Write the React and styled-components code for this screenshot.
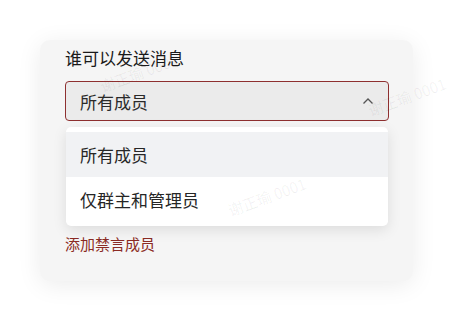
import React from "react";
import styled, { createGlobalStyle } from "styled-components";

const GlobalStyle = createGlobalStyle`
  body {
    margin: 0;
    background: #ffffff;
    font-family: "Noto Sans CJK SC", "Noto Sans", sans-serif;
  }
`;

const Page = styled.div`
  position: relative;
  width: 454px;
  height: 321px;
  overflow: hidden;
  padding: 40px 0 0 40px;
  box-sizing: border-box;
`;

const Card = styled.div`
  width: 373px;
  height: 241px;
  box-sizing: border-box;
  background: #f5f5f5;
  border-radius: 10px;
  box-shadow: 0 4px 24px rgba(0, 0, 0, 0.08);
  padding: 5px 24px 0 25px;
`;

const Title = styled.div`
  font-size: 17px;
  line-height: 25px;
  color: #1a1a1a;
`;

const SelectWrap = styled.div`
  position: relative;
  margin-top: 11px;
`;

const SelectBox = styled.div`
  height: 40px;
  box-sizing: border-box;
  border: 1px solid #8e3030;
  border-radius: 4px;
  background: #ebebeb;
  display: flex;
  align-items: center;
  justify-content: space-between;
  padding: 0 14px 0 14px;
  font-size: 17px;
  color: #2a2a2a;
`;

const Menu = styled.div`
  position: absolute;
  left: 1px;
  right: 1px;
  top: 46px;
  background: #ffffff;
  border-radius: 5px;
  box-shadow: 0 4px 14px rgba(0, 0, 0, 0.1);
  padding: 5px 0 4px;
  z-index: 2;
`;

const Option = styled.div`
  height: 45px;
  display: flex;
  align-items: center;
  padding-left: 14px;
  font-size: 17px;
  color: #262626;
  background: ${(p) => (p.active ? "#f1f2f4" : "#ffffff")};
`;

const AddLink = styled.div`
  margin-top: 113px;
  font-size: 15px;
  line-height: 20px;
  color: #8b2b24;
`;

const Mark = styled.div`
  position: absolute;
  pointer-events: none;
  transform: rotate(-20deg);
  font-size: 15px;
  color: rgba(0, 0, 0, 0.06);
  white-space: nowrap;
  z-index: 5;
`;

const Chevron = () => (
  <svg width="12" height="8" viewBox="0 0 12 8">
    <path d="M1.5 6.5 L6 2 L10.5 6.5" fill="none" stroke="#555" strokeWidth="1.3" />
  </svg>
);

export default function App() {
  return (
    <>
      <GlobalStyle />
      <Page>
        <Card>
          <Title>谁可以发送消息</Title>
          <SelectWrap>
            <SelectBox>
              <span>所有成员</span>
              <Chevron />
            </SelectBox>
            <Menu>
              <Option active>所有成员</Option>
              <Option>仅群主和管理员</Option>
            </Menu>
          </SelectWrap>
          <AddLink>添加禁言成员</AddLink>
        </Card>
        <Mark style={{ left: 98, top: 62 }}>谢正瑜 0001</Mark>
        <Mark style={{ left: 366, top: 86 }}>谢正瑜 0001</Mark>
        <Mark style={{ left: 226, top: 186 }}>谢正瑜 0001</Mark>
      </Page>
    </>
  );
}
